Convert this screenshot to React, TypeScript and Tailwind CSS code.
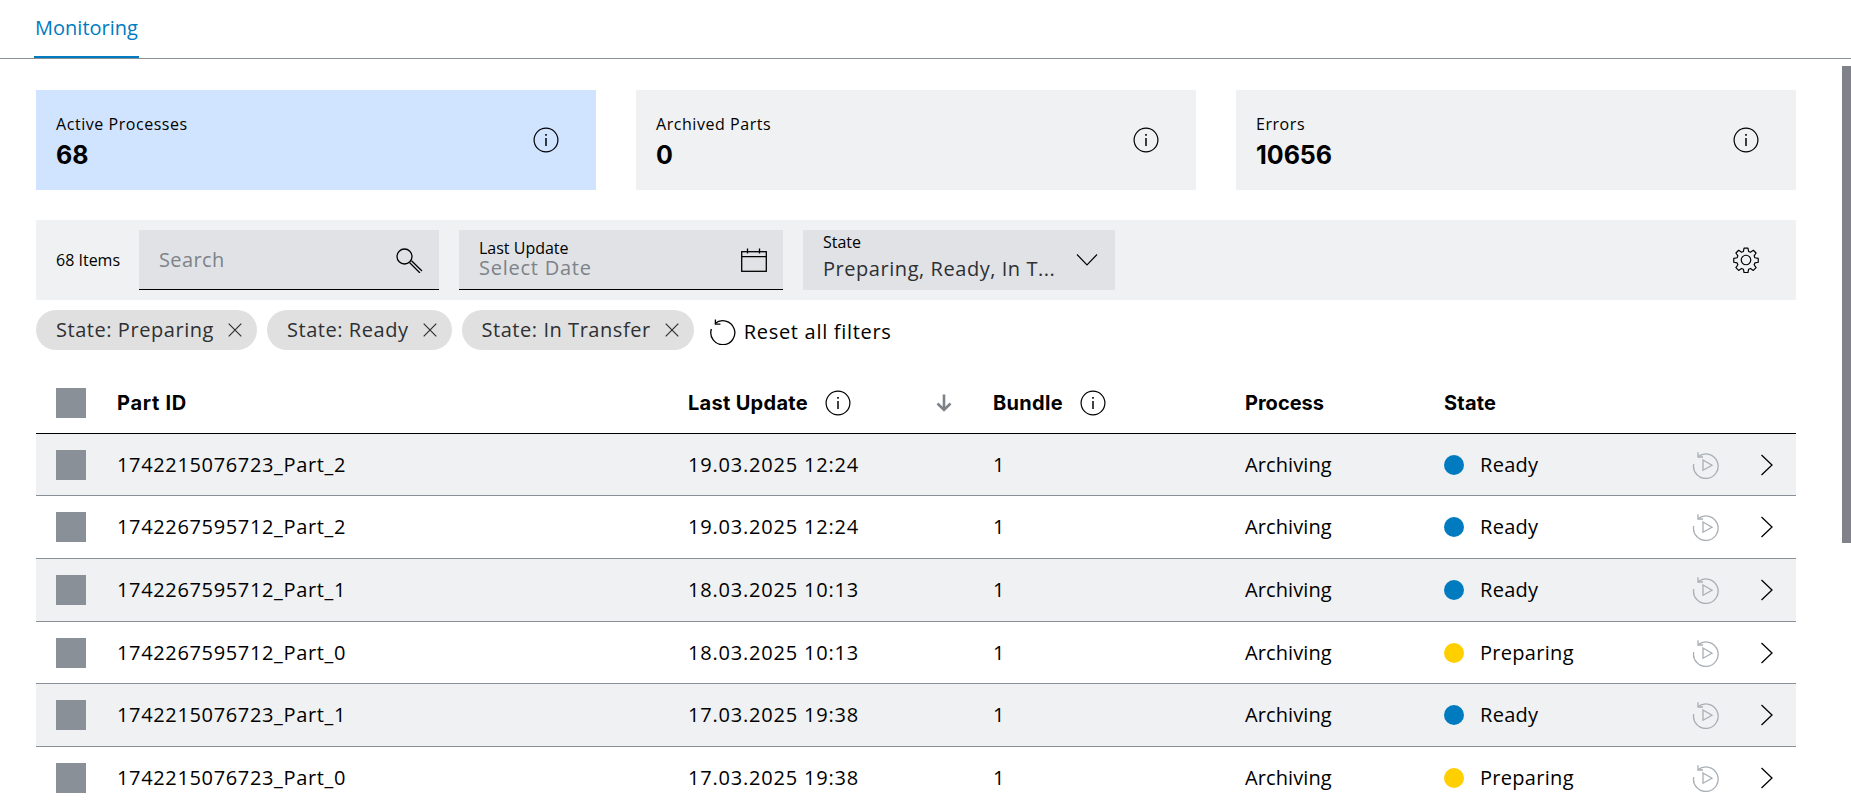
const rowGrid = "grid grid-cols-[61px_571px_305px_252px_199px_248px_61px_28px] items-center pl-[20px]";

type P = { className?: string };

function Info({ className = "" }: P) {
  return (
    <svg viewBox="0 0 26 26" className={`h-[26px] w-[26px] shrink-0 ${className}`} fill="none" stroke="#000" strokeWidth="1.2">
      <circle cx="13" cy="13" r="11.9" />
      <path d="M13 11v8" strokeWidth="1.5" />
      <path d="M13 7v1.8" strokeWidth="1.6" />
    </svg>
  );
}

function Search() {
  return (
    <svg viewBox="0 0 28 26" className="h-[26px] w-[28px]" fill="none" stroke="#000" strokeWidth="1.3">
      <circle cx="9.5" cy="9.5" r="7.5" />
      <path d="M14.5 15.5 L25 26 M16.5 13.7 L27 24 " />
    </svg>
  );
}

function Calendar() {
  return (
    <svg viewBox="0 0 26 24" className="h-[24px] w-[26px]" fill="none" stroke="#000" strokeWidth="1.3">
      <rect x="0.7" y="3.7" width="24.6" height="19.6" />
      <path d="M1 8.7h24M6.5 0.5v5M18.5 0.5v5" />
    </svg>
  );
}

function ChevronDown() {
  return (
    <svg viewBox="0 0 22 14" className="h-[14px] w-[22px]" fill="none" stroke="#000" strokeWidth="1.1">
      <path d="M1 1.5 L11 12 L21 1.5" />
    </svg>
  );
}

function Gear() {
  return (
    <svg viewBox="0 0 24 24" className="h-[26px] w-[26px]" fill="none" stroke="#000" strokeWidth="1.1" strokeLinejoin="round">
      <path d="M10.2 1h3.6l.6 3.1 1.7.7 2.7-1.8 2.5 2.5-1.8 2.7.7 1.7 3.1.6v3.6l-3.1.6-.7 1.7 1.8 2.7-2.5 2.5-2.7-1.8-1.7.7-.6 3.1h-3.6l-.6-3.1-1.7-.7-2.7 1.8-2.5-2.5 1.8-2.7-.7-1.7-3.1-.6v-3.6l3.1-.6.7-1.7-1.8-2.7 2.5-2.5 2.7 1.8 1.7-.7z" />
      <circle cx="12" cy="12" r="4.4" />
    </svg>
  );
}

function Close() {
  return (
    <svg viewBox="0 0 14 14" className="h-[14px] w-[14px] shrink-0" fill="none" stroke="#2e3033" strokeWidth="1.2">
      <path d="M0.7 0.7 L13.3 13.3 M13.3 0.7 L0.7 13.3" />
    </svg>
  );
}

function Reset() {
  return (
    <svg viewBox="0 0 26 26" className="h-[26px] w-[26px] shrink-0" fill="none" stroke="#000" strokeWidth="1.3">
      <path d="M5 4.6 A12 12 0 1 1 1.4 10" />
      <path d="M5.4 0.4 V5.2 H10.4" />
    </svg>
  );
}

function Replay() {
  return (
    <svg viewBox="0 0 28 28" className="h-[28px] w-[28px]" fill="none" stroke="#a9afb5" strokeWidth="1.3">
      <path d="M6.2 5.5 A12.3 12.3 0 1 1 1.7 13" />
      <path d="M6 1.2 V6 H11" />
      <path d="M11 9 L20 14.2 L11 19.2 Z" />
    </svg>
  );
}

function ChevronRight() {
  return (
    <svg viewBox="0 0 14 22" className="h-[22px] w-[14px]" fill="none" stroke="#000" strokeWidth="1.3">
      <path d="M1.5 1 L12 11 L1.5 21" />
    </svg>
  );
}

function ArrowDown() {
  return (
    <svg viewBox="0 0 16 18" className="h-[18px] w-[16px]" fill="none" stroke="#7d8389" strokeWidth="2.6">
      <path d="M8 0.5 V16 M1.5 9.5 L8 16 L14.5 9.5" />
    </svg>
  );
}

function Check() {
  return <div className="h-[30px] w-[30px] bg-[#8a9097]" />;
}

const cards = [
  { label: "Active Processes", value: "68", bg: "bg-[#d1e4ff]" },
  { label: "Archived Parts", value: "0", bg: "bg-[#eff1f2]" },
  { label: "Errors", value: "10656", bg: "bg-[#eff1f2]" },
];

const rows = [
  { id: "1742215076723_Part_2", date: "19.03.2025 12:24", state: "Ready" },
  { id: "1742267595712_Part_2", date: "19.03.2025 12:24", state: "Ready" },
  { id: "1742267595712_Part_1", date: "18.03.2025 10:13", state: "Ready" },
  { id: "1742267595712_Part_0", date: "18.03.2025 10:13", state: "Preparing" },
  { id: "1742215076723_Part_1", date: "17.03.2025 19:38", state: "Ready" },
  { id: "1742215076723_Part_0", date: "17.03.2025 19:38", state: "Preparing" },
];

const chips = ["State: Preparing", "State: Ready", "State: In Transfer"];

export default function App() {
  return (
    <div className="relative h-[800px] overflow-hidden bg-white font-['Open_Sans',sans-serif] text-black">
      <div className="absolute right-0 top-[66px] h-[477px] w-[9px] bg-[#7f8389]" />

      <div className="h-[59px] border-b border-[#8a9097] pl-[34px]">
        <div className="flex h-[58px] w-[105px] items-start justify-center border-b-2 border-[#007bc0] pt-[13px] text-[20px] leading-[30px] text-[#007bc0]">
          Monitoring
        </div>
      </div>

      <div className="pl-[36px] pr-[55px]">
        <div className="mt-[31px] grid grid-cols-3 gap-[40px]">
          {cards.map((c) => (
            <div key={c.label} className={`flex h-[100px] items-center justify-between pl-[20px] pr-[37px] ${c.bg}`}>
              <div className="pt-[4px]">
                <div className="text-[16px] leading-[20px] tracking-[0.55px]">{c.label}</div>
                <div className="mt-[6px] font-['Inter',sans-serif] text-[25px] font-bold leading-[30px]">{c.value}</div>
              </div>
              <Info />
            </div>
          ))}
        </div>

        <div className="mt-[30px] flex h-[80px] items-center bg-[#eff1f2] pl-[20px] pr-[37px]">
          <div className="w-[83px] text-[16px]">68 Items</div>
          <div className="flex h-[60px] w-[300px] items-center justify-between border-b border-black bg-[#e0e2e5] pl-[20px] pr-[16px]">
            <span className="text-[20px] tracking-[0.4px] text-[#7d8389]">Search</span>
            <Search />
          </div>
          <div className="ml-[20px] flex h-[60px] w-[324px] items-center justify-between border-b border-black bg-[#e0e2e5] pl-[20px] pr-[16px]">
            <div className="mb-[1px]">
              <div className="text-[16px] leading-[18px]">Last Update</div>
              <div className="text-[20px] leading-[22px] tracking-[0.75px] text-[#7d8389]">Select Date</div>
            </div>
            <Calendar />
          </div>
          <div className="ml-[20px] flex h-[60px] w-[312px] items-center justify-between bg-[#e0e2e5] pl-[20px] pr-[17px]">
            <div className="pb-[2px]">
              <div className="text-[16px] leading-[16px]">State</div>
              <div className="mt-[4px] text-[20px] leading-[30px] tracking-[0.55px] text-[#2e3033]">Preparing, Ready, In T...</div>
            </div>
            <ChevronDown />
          </div>
          <div className="ml-auto">
            <Gear />
          </div>
        </div>

        <div className="mt-[10px] flex h-[40px] items-center gap-[10px]">
          {chips.map((c) => (
            <div key={c} className="flex h-[40px] items-center gap-[14px] rounded-full bg-[#e0e0e0] pl-[20px] pr-[15px] text-[20px] tracking-[0.55px] text-[#2e3033]">
              {c}
              <Close />
            </div>
          ))}
          <div className="ml-[6px] mt-[3px] flex items-center gap-[8px] text-[20px] tracking-[0.7px]">
            <Reset />
            Reset all filters
          </div>
        </div>

        <div className={`mt-[20px] box-border h-[63.8px] border-b border-black pt-[3px] font-['Inter',sans-serif] text-[20px] font-bold ${rowGrid}`}>
          <Check />
          <div className="tracking-[0.7px]">Part ID</div>
          <div className="flex items-center tracking-[0.3px]">
            Last Update
            <Info className="ml-[17px]" />
            <span className="ml-[85px] flex">
              <ArrowDown />
            </span>
          </div>
          <div className="flex items-center tracking-[0.3px]">
            Bundle
            <Info className="ml-[17px]" />
          </div>
          <div>Process</div>
          <div className="tracking-[0.2px]">State</div>
        </div>

        {rows.map((r, i) => (
          <div
            key={r.id}
            className={`box-border h-[62.67px] border-b border-[#8a9097] text-[20px] ${rowGrid} ${i % 2 === 0 ? "bg-[#eff1f2]" : "bg-white"}`}
          >
            <Check />
            <div className="tracking-[0.65px]">{r.id}</div>
            <div className="tracking-[0.8px]">{r.date}</div>
            <div>1</div>
            <div className="tracking-[0.1px]">Archiving</div>
            <div className="flex items-center gap-[16px] tracking-[0.3px]">
              <span className={`h-[20px] w-[20px] rounded-full ${r.state === "Ready" ? "bg-[#007bc0]" : "bg-[#ffcf00]"}`} />
              {r.state}
            </div>
            <Replay />
            <div className="flex justify-center">
              <ChevronRight />
            </div>
          </div>
        ))}
      </div>
    </div>
  );
}
